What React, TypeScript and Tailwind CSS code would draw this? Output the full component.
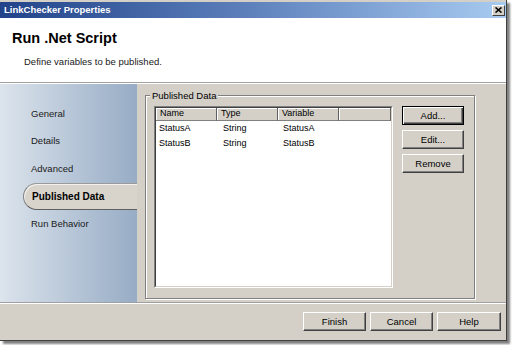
const navItems = ['General', 'Details', 'Advanced', 'Published Data', 'Run Behavior'];
const selected = 'Published Data';

const rows = [
  { name: 'StatusA', type: 'String', variable: 'StatusA' },
  { name: 'StatusB', type: 'String', variable: 'StatusB' },
];

// classic raised 3d button
function WinButton({ label, isDefault = false, className = '' }: { label: string; isDefault?: boolean; className?: string }) {
  const edge = isDefault
    ? 'border border-black shadow-[inset_1px_1px_0_#fff,inset_-1px_-1px_0_#404040,inset_-2px_-2px_0_#808080]'
    : 'border border-t-white border-l-white border-r-[#404040] border-b-[#404040] shadow-[inset_-1px_-1px_0_#808080]';
  return (
    <button className={`h-[19px] bg-[#d4d0c8] text-[9.5px] leading-none text-black flex items-center justify-center ${edge} ${className}`}>
      {label}
    </button>
  );
}

function HeaderCell({ label, className = '' }: { label: string; className?: string }) {
  return (
    <div className={`h-full flex items-center pl-[4px] text-[9px] bg-[#d4d0c8] border-r border-b border-r-[#606060] border-b-[#808080] shadow-[inset_1px_1px_0_#fff] ${className}`}>
      {label}
    </div>
  );
}

export default function App() {
  return (
    <div className="w-[512px] h-[345px] bg-white overflow-hidden font-['Liberation_Sans',Arial,sans-serif] text-black">
      <div className="w-[507px] h-[341px] flex flex-col bg-[#d4d0c8] pt-[2px] border-r border-b border-[#404040] shadow-[3px_3px_2px_rgba(0,0,0,0.5)]">
        {/* Title bar */}
        <div className="h-[16px] shrink-0 flex items-center justify-between pl-[4px] pr-[1px] bg-gradient-to-r from-[#22438a] via-[#5f82bd] to-[#a8cbf1]">
          <span className="text-white font-bold text-[9.5px] leading-none">LinkChecker Properties</span>
          <div className="w-[13px] h-[11px] bg-[#d4d0c8] border border-t-white border-l-white border-r-[#404040] border-b-[#404040] flex items-center justify-center">
            <svg width="7" height="6" viewBox="0 0 7 6">
              <path d="M0.5 0.5 L6.5 5.5 M6.5 0.5 L0.5 5.5" stroke="#000" strokeWidth="1.6" />
            </svg>
          </div>
        </div>

        {/* Header */}
        <div className="h-[64px] shrink-0 bg-white pl-[12px] pt-[12px]">
          <div className="text-[14.5px] font-bold leading-[16px]">Run .Net Script</div>
          <div className="text-[9.5px] leading-[11px] mt-[10px] pl-[12px] text-[#202020]">Define variables to be published.</div>
        </div>
        <div className="h-px shrink-0 bg-[#a0a0a0]" />
        <div className="h-px shrink-0 bg-white" />

        {/* Body */}
        <div className="flex-1 flex min-h-0">
          <div className="w-[137px] shrink-0 bg-gradient-to-r from-[#dce4ec] to-[#97acc5] pt-[16px]">
            {navItems.map((item) =>
              item === selected ? (
                <div
                  key={item}
                  className="h-[27.5px] ml-[23px] pl-[8px] flex items-center bg-[#d8d4cc] rounded-l-[14px] border border-r-0 border-t-[#9a9a9a] border-l-[#808080] border-b-[#606060] shadow-[inset_1px_1px_0_#f4f2ee] text-[10px] font-bold"
                >
                  {item}
                </div>
              ) : (
                <div key={item} className="h-[27.5px] pl-[31px] flex items-center text-[9.5px] text-[#1a1a1a]">
                  {item}
                </div>
              )
            )}
          </div>

          <div className="flex-1 min-w-0">
            <fieldset className="ml-[8px] mt-[6px] w-[330px] h-[209px] border border-[#808080] shadow-[inset_1px_1px_0_#fff,1px_1px_0_#fff]">
              <legend className="ml-[4px] px-[2px] text-[9.5px] leading-[11px] bg-[#d4d0c8]">Published Data</legend>
              <div className="flex pl-[8px] pt-[5px]">
                {/* List view */}
                <div className="w-[239px] h-[182px] border border-t-[#808080] border-l-[#808080] border-r-white border-b-white">
                  <div className="w-full h-full bg-white border border-t-[#404040] border-l-[#404040] border-r-[#d4d0c8] border-b-[#d4d0c8] flex flex-col">
                    <div className="h-[13px] flex shrink-0">
                      <HeaderCell label="Name" className="w-[61px]" />
                      <HeaderCell label="Type" className="w-[61px]" />
                      <HeaderCell label="Variable" className="w-[61px]" />
                      <HeaderCell label="" className="flex-1" />
                    </div>
                    {rows.map((r) => (
                      <div key={r.name} className="h-[15px] flex items-center text-[9px]">
                        <div className="w-[61px] pl-[3px]">{r.name}</div>
                        <div className="w-[61px] pl-[6px]">{r.type}</div>
                        <div className="w-[61px] pl-[5px]">{r.variable}</div>
                      </div>
                    ))}
                  </div>
                </div>

                <div className="ml-[9px] flex flex-col gap-[5px]">
                  <WinButton label="Add..." isDefault className="w-[62px]" />
                  <WinButton label="Edit..." className="w-[62px]" />
                  <WinButton label="Remove" className="w-[62px]" />
                </div>
              </div>
            </fieldset>
          </div>
        </div>

        {/* Footer */}
        <div className="h-px shrink-0 bg-[#a0a0a0]" />
        <div className="h-px shrink-0 bg-white" />
        <div className="h-[36px] shrink-0 flex justify-end items-start pt-[8px] pr-[5px] gap-[4px]">
          <WinButton label="Finish" className="w-[63px]" />
          <WinButton label="Cancel" className="w-[63px]" />
          <WinButton label="Help" className="w-[64px]" />
        </div>
      </div>
    </div>
  );
}
